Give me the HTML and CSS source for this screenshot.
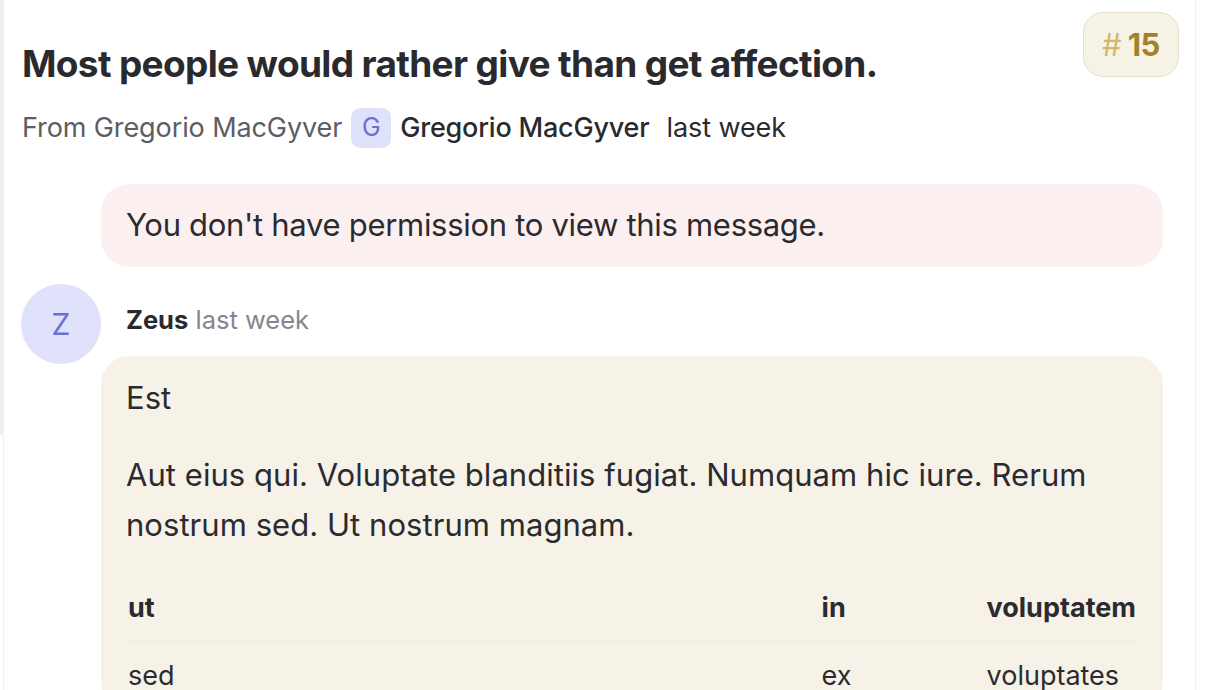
FILE: index.html
```html
<!DOCTYPE html>
<html lang="en">
<head>
<meta charset="utf-8">
<title>Thread</title>
<link rel="stylesheet" href="styles.css">
</head>
<body>
<div class="shell">
  <div class="rail"></div>
  <main class="page">
    <header class="head">
      <div class="head-text">
        <h1 class="title">Most people would rather give than get affection.</h1>
        <div class="meta">
          <span class="from">From Gregorio MacGyver</span>
          <span class="chip">G</span>
          <span class="author">Gregorio MacGyver</span>
          <span class="when">last week</span>
        </div>
      </div>
      <div class="badge"><span class="hash">#</span><span class="num">15</span></div>
    </header>

    <section class="thread">
      <div class="row">
        <div class="avatar-slot"></div>
        <div class="bubble bubble-denied">You don't have permission to view this message.</div>
      </div>

      <div class="row">
        <div class="avatar-slot"><div class="avatar">Z</div></div>
        <div class="msg">
          <div class="msg-head"><span class="msg-author">Zeus</span> <span class="msg-when">last week</span></div>
          <div class="bubble bubble-msg">
            <p class="lead">Est</p>
            <p class="para">Aut eius qui. Voluptate blanditiis fugiat. Numquam hic iure. Rerum nostrum sed. Ut nostrum magnam.</p>
            <table class="tbl">
              <thead>
                <tr><th class="c1">ut</th><th class="c2">in</th><th class="c3">voluptatem</th></tr>
              </thead>
              <tbody>
                <tr><td>sed</td><td>ex</td><td>voluptates</td></tr>
              </tbody>
            </table>
          </div>
        </div>
      </div>
    </section>
  </main>
</div>
</body>
</html>
```

FILE: styles.css
```css
* { box-sizing: border-box; }
html, body { margin: 0; padding: 0; background: #ffffff; }
body {
  font-family: Inter, "Noto Sans", "Liberation Sans", sans-serif;
  color: #2b2b2f;
  overflow: hidden;
  height: 690px;
}
.shell { display: flex; align-items: flex-start; width: 1196px; }
.rail { width: 3px; height: 435px; background: #f0eff6; flex: none; }
.page {
  flex: 1;
  min-height: 690px;
  border-left: 1px solid #efeef7;
  border-right: 1px solid #efeef7;
}
.head {
  display: flex;
  justify-content: space-between;
  align-items: flex-start;
  padding: 12px 16px 0 18px;
}
.head-text { padding-top: 30px; }
.title {
  margin: 0;
  font-size: 37px;
  line-height: 44px;
  font-weight: 700;
  letter-spacing: -0.65px;
  color: #2a2a2e;
}
.meta {
  display: flex;
  align-items: center;
  margin-top: 22px;
  font-size: 27px;
  line-height: 40px;
  letter-spacing: -0.1px;
}
.from { color: #5d5d62; }
.chip {
  width: 40px; height: 40px;
  border-radius: 9px;
  background: #e0e2fc;
  color: #6b70d2;
  display: flex; align-items: center; justify-content: center;
  font-size: 25px;
  margin: 0 9px;
  padding-bottom: 3px;
  letter-spacing: 0;
}
.author { font-weight: 500; color: #2a2a2e; letter-spacing: -0.2px; }
.when { margin-left: 17px; color: #2a2a2e; }
.badge {
  width: 96px; height: 65px;
  border-radius: 20px;
  background: #f6f2e6;
  border: 1px solid #e6e0cd;
  display: flex; align-items: center; justify-content: center;
  gap: 6px;
  font-size: 31px;
}
.hash { color: #d5b866; }
.num { color: #a0822a; font-weight: 700; letter-spacing: -0.5px; }

.thread { padding: 36px 32px 0 17px; display: flex; flex-direction: column; gap: 17px; }
.row { display: flex; align-items: flex-start; }
.avatar-slot { width: 80px; flex: none; }
.avatar {
  width: 80px; height: 80px; border-radius: 50%;
  background: #e0e2fc; color: #6b70d2;
  display: flex; align-items: center; justify-content: center;
  font-size: 30px;
}
.bubble { border-radius: 28px; font-size: 31px; line-height: 50px; }
.bubble-denied {
  flex: 1;
  background: #fcefef;
  padding: 16px 25px 17px;
  letter-spacing: -0.3px;
}
.msg { flex: 1; }
.msg-head { padding: 20px 25px 0; font-size: 25.5px; line-height: 32px; height: 72px; }
.msg-author { font-weight: 700; color: #2a2a2e; }
.msg-when { color: #86868c; }
.bubble-msg {
  background: #f6f2e8;
  padding: 17px 25px 0;
}
.lead { margin: 0; }
.para { margin: 27px 0 0; letter-spacing: 0.05px; }
.tbl {
  width: 100%;
  border-collapse: collapse;
  margin-top: 42px;
  font-size: 27px;
  line-height: 32px;
  letter-spacing: 0;
}
.tbl th { text-align: left; font-weight: 700; padding: 0 2px 17px; border-bottom: 1px solid #efeadc; }
.tbl td { padding: 18px 2px; }
.c1 { width: 694px; }
.c2 { width: 165px; }
```
